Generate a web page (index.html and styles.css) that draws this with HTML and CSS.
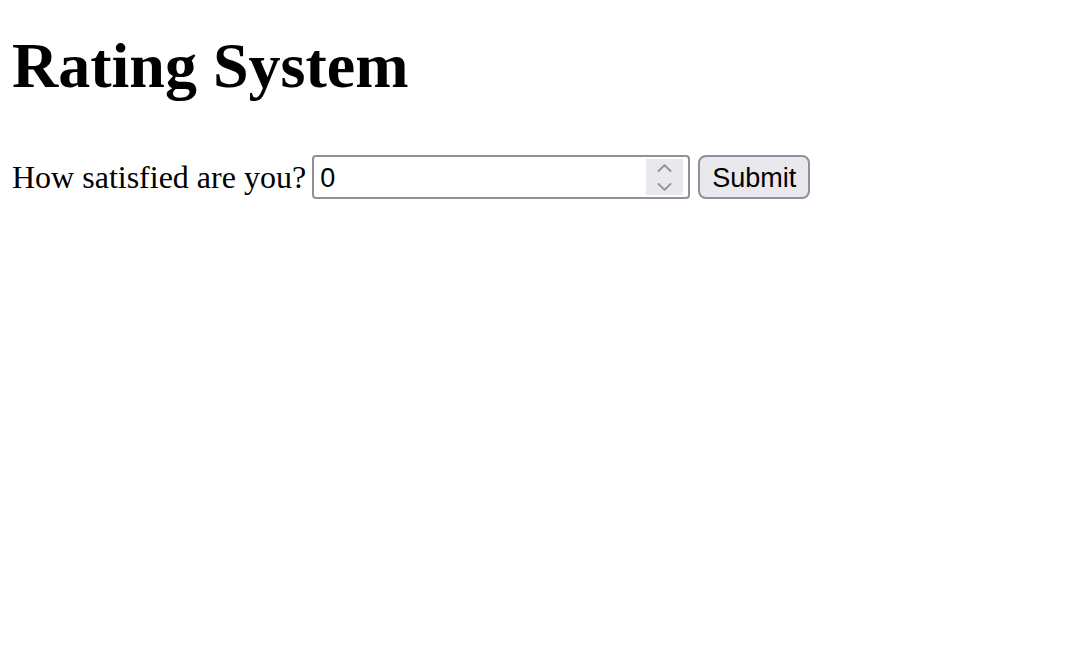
FILE: index.html
```html
<!DOCTYPE html>
<html lang="en">
<head>
<meta charset="utf-8">
<title>Rating System</title>
<link rel="stylesheet" href="styles.css">
</head>
<body>
<main class="page">
  <h1 class="title">Rating System</h1>
  <form class="row" onsubmit="return false;">
    <label class="label" for="rating">How satisfied are you?</label>
    <span class="number-field">
      <input class="number-input" id="rating" type="number" value="0">
      <span class="spinner" aria-hidden="true">
        <svg width="15" height="8" viewBox="0 0 15 8"><path d="M1.5 7 L7.5 1.2 L13.5 7" fill="none" stroke="#8f8f9d" stroke-width="1.8" stroke-linecap="round" stroke-linejoin="round"/></svg>
        <svg width="15" height="8" viewBox="0 0 15 8"><path d="M1.5 1 L7.5 6.8 L13.5 1" fill="none" stroke="#8f8f9d" stroke-width="1.8" stroke-linecap="round" stroke-linejoin="round"/></svg>
      </span>
    </span>
    <button class="submit" type="submit">Submit</button>
  </form>
</main>
</body>
</html>
```
FILE: styles.css
```css
html, body {
  margin: 0;
  padding: 0;
  background: #ffffff;
}

.page {
  padding: 30px 12px;
  font-family: "Liberation Serif", "Times New Roman", serif;
  color: #000000;
}

.title {
  margin: 0 0 54px 0;
  font-size: 64px;
  font-weight: bold;
  line-height: 71px;
}

.row {
  display: flex;
  align-items: center;
  margin: 0;
}

.label {
  font-size: 32px;
  line-height: 36px;
  margin-right: 6px;
}

.number-field {
  display: flex;
  align-items: stretch;
  box-sizing: border-box;
  width: 378px;
  height: 44px;
  border: 2px solid #8f8f9d;
  border-radius: 4px;
  background: #ffffff;
}

.number-input {
  flex: 1;
  min-width: 0;
  border: none;
  outline: none;
  padding: 2px 0 0 6px;
  margin: 0;
  font-family: "Liberation Sans", Arial, sans-serif;
  font-size: 27px;
  color: #000000;
  background: transparent;
  -moz-appearance: textfield;
  appearance: textfield;
}

.number-input::-webkit-outer-spin-button,
.number-input::-webkit-inner-spin-button {
  -webkit-appearance: none;
  margin: 0;
}

.spinner {
  width: 37px;
  margin: 2px 5px 2px 0;
  background: #e9e9ed;
  display: flex;
  flex-direction: column;
  align-items: center;
  justify-content: center;
  gap: 11px;
}

.spinner svg {
  display: block;
}

.submit {
  box-sizing: border-box;
  height: 44px;
  margin-left: 8px;
  padding: 2px 12px 0;
  border: 2px solid #8f8f9d;
  border-radius: 8px;
  background: #e9e9ed;
  font-family: "Liberation Sans", Arial, sans-serif;
  font-size: 27px;
  color: #000000;
}
```
